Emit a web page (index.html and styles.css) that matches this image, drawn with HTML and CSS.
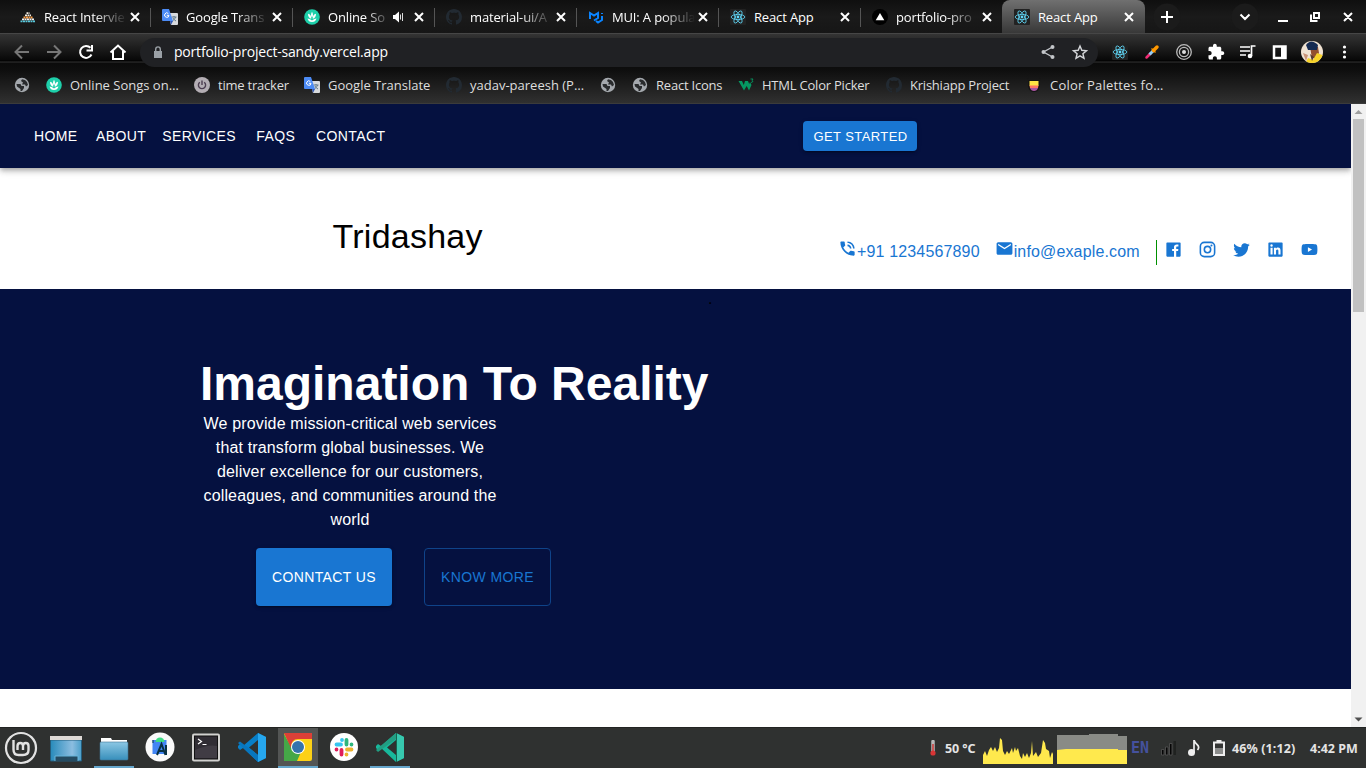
FILE: index.html
```html
<!DOCTYPE html>
<html lang="en">
<head>
<meta charset="utf-8">
<title>React App</title>
<link rel="stylesheet" href="styles.css">
</head>
<body>
<svg class="defs" width="0" height="0">
  <symbol id="x" viewBox="0 0 16 16"><path d="M4 4l8 8M12 4l-8 8" stroke="currentColor" stroke-width="2" fill="none"/></symbol>
  <symbol id="react" viewBox="0 0 16 16"><rect width="16" height="16" rx="1" fill="#222"/><g fill="none" stroke="#61dafb" stroke-width=".8"><ellipse cx="8" cy="8" rx="6.8" ry="2.6"/><ellipse cx="8" cy="8" rx="6.8" ry="2.6" transform="rotate(60 8 8)"/><ellipse cx="8" cy="8" rx="6.8" ry="2.6" transform="rotate(120 8 8)"/></g><circle cx="8" cy="8" r="1.4" fill="#61dafb"/></symbol>
  <symbol id="translate" viewBox="0 0 16 16"><path d="M6 4h9a1 1 0 0 1 1 1v10a1 1 0 0 1-1 1H9z" fill="#d8dadd"/><path d="M9.5 8h5M12 7v1M13.5 8c-.5 2-2 3-3 4M11 9c.7 1.500 1.500 2 3 3" stroke="#607988" fill="none"/><path d="M1 0h6l4 12H1a1 1 0 0 1-1-1V1a1 1 0 0 1 1-1z" fill="#4c8bf5"/><path d="M8 12h3l-2 4z" fill="#3057b5"/><path d="M6.300 4.500A2.200 2.200 0 1 0 7 6.300H4.800" stroke="#fff" fill="none"/></symbol>
  <symbol id="saavn" viewBox="0 0 16 16"><circle cx="8" cy="8" r="7.800" fill="#1ecfaa"/><path d="M8 8.500Q6 6.500 8 2.700 10 6.500 8 8.500z" fill="#fff"/><path d="M7.300 9.800Q4 9 4 4.800 7.300 5.500 7.300 9.800zM8.700 9.800q0-4.300 3.300-5Q12 9 8.700 9.800zM3.500 9.500Q5.500 9.700 8 11.500q2.500-1.800 4.500-2Q11.500 13 8 13t-4.500-3.500z" fill="#fff"/></symbol>
  <symbol id="github" viewBox="0 0 16 16"><path fill="#222a32" d="M8 0C3.580 0 0 3.580 0 8c0 3.540 2.290 6.530 5.470 7.590.4.070.550-.170.550-.380 0-.190-.010-.820-.010-1.490-2.010.370-2.530-.490-2.690-.940-.090-.230-.480-.940-.820-1.130-.280-.150-.680-.520-.010-.530.630-.010 1.080.580 1.230.820.720 1.210 1.870.870 2.330.660.070-.520.280-.870.510-1.070-1.780-.200-3.640-.890-3.640-3.950 0-.870.310-1.590.820-2.150-.080-.200-.360-1.020.080-2.120 0 0 .670-.210 2.200.820.640-.180 1.320-.270 2-.270s1.360.090 2 .270c1.530-1.040 2.200-.820 2.200-.820.440 1.100.160 1.920.080 2.120.510.560.820 1.270.820 2.150 0 3.070-1.870 3.750-3.650 3.950.290.250.540.730.540 1.480 0 1.070-.010 1.930-.010 2.200 0 .210.150.460.550.380A8.010 8.010 0 0 0 16 8c0-4.420-3.580-8-8-8z"/></symbol>
  <symbol id="globe" viewBox="0 0 16 16"><circle cx="8" cy="8" r="7.200" fill="#a4a8ad"/><path d="M2.500 7h4l1 2H10v2l-2 3H6.500v-2L3 9.500zM8 2.200L7 4l2 1.500L8 7.500h3L12 9.500l2-1.500-1-3-2-2z" fill="#292b2d"/></symbol>
</svg>

<header class="browser">
  <div class="tabs">
    <div class="tab"><svg class="fav" viewBox="0 0 16 16"><path d="M6.500 4.200h3M5 6.300h6" stroke="#f3ede2" stroke-width="1.800" stroke-dasharray="2 .5"/><path d="M3.500 8.500h9" stroke="#ff9f43" stroke-width="1.800" stroke-dasharray="2 .5"/><path d="M2 10.400h12" stroke="#eee" stroke-width="1.700" stroke-dasharray="2 .5"/><path d="M.5 12.300h15" stroke="#59c9dc" stroke-width="1.800" stroke-dasharray="2 .5"/></svg><span class="title fade">React Intervie</span><svg class="close"><use href="#x"/></svg></div>
    <div class="tab"><svg class="fav"><use href="#translate"/></svg><span class="title fade">Google Trans</span><svg class="close"><use href="#x"/></svg></div>
    <div class="tab"><svg class="fav"><use href="#saavn"/></svg><span class="title short fade">Online So</span><svg class="sound" viewBox="0 0 12 12"><path d="M0 4h2l4-3.500v11L2 8H0z" fill="#fff"/><path d="M7.500 3.500v5M9.500 2v8" stroke="#ddd"/></svg><svg class="close"><use href="#x"/></svg></div>
    <div class="tab"><svg class="fav"><use href="#github"/></svg><span class="title fade">material-ui/A</span><svg class="close"><use href="#x"/></svg></div>
    <div class="tab"><svg class="fav" viewBox="0 0 16 16"><path d="M2 10V4l4 2.500L10 4v5l-4 2.500M14 4v1M14 7v4l-4 2.500-2-1.500" stroke="#0a84ff" stroke-width="2" fill="none"/></svg><span class="title fade">MUI: A popula</span><svg class="close"><use href="#x"/></svg></div>
    <div class="tab"><svg class="fav"><use href="#react"/></svg><span class="title">React App</span><svg class="close"><use href="#x"/></svg></div>
    <div class="tab last"><svg class="fav" viewBox="0 0 16 16"><circle cx="8" cy="8" r="8" fill="#000"/><path d="M8 4l4.300 7.300H3.700z" fill="#fff"/></svg><span class="title fade">portfolio-pro</span><svg class="close"><use href="#x"/></svg></div>
    <div class="tab active"><svg class="fav"><use href="#react"/></svg><span class="title">React App</span><svg class="close"><use href="#x"/></svg></div>
    <svg class="window" viewBox="1145 0 221 33" fill="none" stroke="#fff" stroke-width="2"><circle cx="1167" cy="17" r="13.500" fill="#1b1b1b" stroke="none"/><circle cx="1245" cy="17" r="13.500" fill="#1b1b1b" stroke="none"/><path d="M1161 17h12M1167 11v12M1240.500 14.500l4.500 4.500 4.500-4.500M1278 21h10M1344 13l8 8M1352 13l-8 8"/><path d="M1314 13h5v5h-5zM1311 14.500v6.500h6.500"/></svg>
  </div>
  <div class="toolbar">
    <svg class="navicons" viewBox="0 36 140 32" fill="none" stroke="#fff" stroke-width="2"><path d="M29 52H16M22 45.500L15.500 52l6.500 6.500M47 52h13M54 45.500l6.500 6.500-6.500 6.500" stroke="#777"/><path d="M91.500 54.500A6 6 0 1 1 90.500 47.800M92 45v5.500h-5.500"/><path d="M110.500 52.500L118 45.500l7.500 7M113 51v8h10v-8"/></svg>
    <div class="omnibox">
      <svg class="lock" viewBox="0 0 10 13"><path d="M1 5h8v7H1z" fill="#9aa0a6"/><path d="M2.700 5V3.200a2.300 2.300 0 0 1 4.600 0V5" fill="none" stroke="#9aa0a6" stroke-width="1.400"/></svg>
      <span class="url">portfolio-project-sandy.vercel.app</span>
      <svg class="boxicons" viewBox="1032 38 66 29"><path d="M1052.500 47l-9 5 9 5" fill="none" stroke="#c4c7cb" stroke-width="1.400"/><g fill="#c4c7cb"><circle cx="1052.500" cy="47" r="2"/><circle cx="1043.500" cy="52" r="2"/><circle cx="1052.500" cy="57" r="2"/></g><path d="M1080 46l1.800 4.300 4.700.4-3.600 3 1.100 4.600-4-2.500-4 2.500 1.100-4.600-3.600-3 4.700-.4z" fill="none" stroke="#d5d7da" stroke-width="1.400"/></svg>
    </div>
    <svg class="exticons" viewBox="1098 36 268 32">
      <use href="#react" x="1112" y="44" width="16" height="16"/>
      <path d="M1146.500 57.500l4-4" stroke="#f12d75" stroke-width="2.500" stroke-linecap="round"/><path d="M1149.500 54.500l4-4" stroke="#95cef5" stroke-width="3"/><path d="M1153.500 50.500l3.500-3.500" stroke="#ff9800" stroke-width="3.500" stroke-linecap="round"/><path d="M1151.500 48.500l4 4" stroke="#ff9800" stroke-width="1.200"/>
      <g fill="none" stroke="#bbb" stroke-width="1.300"><circle cx="1184" cy="52" r="7.300"/><circle cx="1184" cy="52" r="4.600"/></g><circle cx="1184" cy="52" r="2" fill="#ddd"/>
      <path transform="translate(1207 43) scale(.75)" fill="#fff" d="M20.500 11H19V7c0-1.100-.9-2-2-2h-4V3.500C13 2.120 11.880 1 10.500 1S8 2.120 8 3.500V5H4c-1.100 0-2 .9-2 2v3.800h1.500c1.500 0 2.700 1.200 2.700 2.700S5 16.200 3.500 16.200H2V20c0 1.100.9 2 2 2h3.800v-1.500c0-1.500 1.200-2.700 2.700-2.700s2.700 1.200 2.700 2.700V22H17c1.100 0 2-.9 2-2v-4h1.500c1.380 0 2.500-1.120 2.500-2.500S21.880 11 20.500 11z"/>
      <path d="M1240 47h10M1240 51h10M1240 55h6M1251.500 56v-10h4" fill="none" stroke="#fff" stroke-width="1.700"/><circle cx="1250" cy="56" r="2.300" fill="#fff"/>
      <path d="M1274 46.500h11.500v11.500H1274z" fill="none" stroke="#fff" stroke-width="2.500"/><path d="M1281 46h5v12h-5z" fill="#fff"/>
      <clipPath id="av"><circle cx="1312" cy="52" r="11"/></clipPath><g clip-path="url(#av)"><path d="M1300 40h24v24h-24z" fill="#f0e2d2"/><path d="M1310 47h8l1 6-3 5h-4z" fill="#93502f"/><path d="M1306 45q5-7 12 0l-1 5h-9z" fill="#152b52"/><path d="M1305 64l3-6 5 2 4-7 8 3-2 8z" fill="#f7d329"/><path d="M1303 53l5 2-2 6z" fill="#c99277"/><path d="M1310 54l4 3-2 4z" fill="#593b2e"/></g>
      <g fill="#fff"><circle cx="1344.500" cy="47" r="1.600"/><circle cx="1344.500" cy="52" r="1.600"/><circle cx="1344.500" cy="57" r="1.600"/></g>
    </svg>
  </div>
  <div class="bookmarks">
    <div><svg><use href="#globe"/></svg></div>
    <div><svg><use href="#saavn"/></svg><span>Online Songs on…</span></div>
    <div><svg viewBox="0 0 16 16"><circle cx="8" cy="8" r="8" fill="#b4aeb4"/><path d="M5.800 5.200a3.600 3.600 0 1 0 4.400 0M8 3.500V8" fill="none" stroke="#4b3d50" stroke-width="1.400"/></svg><span class="tight">time tracker</span></div>
    <div><svg><use href="#translate"/></svg><span>Google Translate</span></div>
    <div><svg><use href="#github"/></svg><span>yadav-pareesh (P…</span></div>
    <div><svg><use href="#globe"/></svg></div>
    <div><svg><use href="#globe"/></svg><span class="tight">React Icons</span></div>
    <div><svg viewBox="0 0 16 16"><path d="M.5 4H4l1.800 4L7 4h3l1.200 3L12 5l1.500 3L11 13.500 8.700 9 6 13.500z" fill="#059862"/><path d="M12.500 2H15l-1 1.500q1.500.5.500 1.500l-1.500.5" fill="none" stroke="#059862" stroke-width=".9"/></svg><span class="tight">HTML Color Picker</span></div>
    <div><svg><use href="#github"/></svg><span class="tight">Krishiapp Project</span></div>
    <div><svg viewBox="0 0 16 16"><path d="M2 3h12v6q-1 6-6 6T2 9z" fill="#141414"/><path d="M3.500 4h9v5h-9z" fill="#ffe344"/><path d="M3.500 8.500h9L12 11H4z" fill="#ff7565"/><path d="M4 11h8q-1 3-4 3t-4-3z" fill="#a855a0"/><path d="M1 2l2-1M13 1l2 1" stroke="#151515"/></svg><span class="loose">Color Palettes fo…</span></div>
  </div>
</header>

<div class="viewport">
  <main class="page">
    <nav class="nav">
      <a class="home">HOME</a><a class="about">ABOUT</a><a class="services">SERVICES</a><a class="faqs">FAQS</a><a>CONTACT</a>
      <button class="btn start">GET STARTED</button>
    </nav>
    <section class="brandbar">
      <h4 class="brand">Tridashay</h4>
      <div class="contact">
        <a class="phone"><svg viewBox="0 0 24 24"><path d="M20 15.500c-1.250 0-2.450-.2-3.570-.57-.35-.11-.74-.03-1.020.24l-2.200 2.200c-2.830-1.440-5.150-3.750-6.590-6.590l2.200-2.210c.28-.26.36-.65.25-1C8.700 6.450 8.500 5.250 8.500 4c0-.55-.45-1-1-1H4c-.55 0-1 .45-1 1 0 9.390 7.610 17 17 17 .55 0 1-.45 1-1v-3.500c0-.55-.45-1-1-1zM19 12h2c0-4.970-4.030-9-9-9v2c3.870 0 7 3.130 7 7zm-4 0h2c0-2.760-2.240-5-5-5v2c1.660 0 3 1.340 3 3z"/></svg><span>+91 1234567890</span></a>
        <a class="mail"><svg viewBox="0 0 24 24"><path d="M20 4H4c-1.100 0-1.990.9-1.990 2L2 18c0 1.100.9 2 2 2h16c1.100 0 2-.9 2-2V6c0-1.100-.9-2-2-2zm0 4l-8 5-8-5V6l8 5 8-5v2z"/></svg><span>info@exaple.com</span></a>
        <div class="social">
          <svg viewBox="0 0 24 24"><path d="M20 3H4a1 1 0 0 0-1 1v16a1 1 0 0 0 1 1h8.615v-6.960h-2.338v-2.725h2.338v-2c0-2.325 1.420-3.592 3.500-3.592.699-.002 1.399.034 2.095.107v2.420h-1.435c-1.128 0-1.348.538-1.348 1.325v1.735h2.697l-.35 2.725h-2.348V21H20a1 1 0 0 0 1-1V4a1 1 0 0 0-1-1z"/></svg>
          <svg viewBox="0 0 24 24"><rect x="3" y="3" width="18" height="18" rx="5" fill="none" stroke="currentColor" stroke-width="2"/><circle cx="12" cy="12" r="4" fill="none" stroke="currentColor" stroke-width="2"/><circle cx="17" cy="7" r="1.300"/></svg>
          <svg viewBox="0 0 24 24"><path d="M22.460 6c-.77.35-1.600.58-2.460.69.88-.53 1.560-1.370 1.880-2.380-.83.5-1.750.85-2.720 1.050C18.370 4.500 17.260 4 16 4c-2.350 0-4.270 1.920-4.270 4.290 0 .34.04.67.11.98C8.280 9.090 5.110 7.380 3 4.790c-.37.63-.58 1.370-.58 2.150 0 1.490.75 2.810 1.910 3.560-.71 0-1.370-.2-1.950-.5v.03c0 2.080 1.480 3.820 3.440 4.210a4.220 4.220 0 0 1-1.930.07 4.280 4.280 0 0 0 4 2.980 8.521 8.521 0 0 1-5.330 1.840c-.34 0-.68-.02-1.020-.06C3.440 20.290 5.700 21 8.120 21 16 21 20.330 14.460 20.330 8.790c0-.19 0-.37-.01-.56.84-.6 1.560-1.360 2.140-2.230z"/></svg>
          <svg viewBox="0 0 24 24"><path d="M20 3H4a1 1 0 0 0-1 1v16a1 1 0 0 0 1 1h16a1 1 0 0 0 1-1V4a1 1 0 0 0-1-1zM8.339 18.337H5.667v-8.590h2.672v8.590zM7.003 8.574a1.548 1.548 0 1 1 0-3.096 1.548 1.548 0 0 1 0 3.096zm11.335 9.763h-2.669V14.160c0-.996-.018-2.277-1.388-2.277-1.390 0-1.601 1.086-1.601 2.207v4.248h-2.667v-8.590h2.560v1.174h.037c.355-.675 1.227-1.387 2.524-1.387 2.704 0 3.203 1.778 3.203 4.092v4.711z"/></svg>
          <svg viewBox="0 0 24 24"><path d="M21.590 7.200c-.23-.86-.91-1.540-1.770-1.770C18.250 5 12 5 12 5s-6.250 0-7.820.42c-.86.23-1.540.91-1.770 1.770C2 8.770 2 12 2 12s0 3.230.42 4.800c.23.86.91 1.540 1.770 1.770C5.750 19 12 19 12 19s6.250 0 7.820-.42c.86-.23 1.540-.91 1.770-1.770C22 15.230 22 12 22 12s0-3.230-.41-4.800zM10 15V9l5.200 3z"/></svg>
        </div>
      </div>
    </section>
    <section class="hero">
      <div class="dot">.</div>
      <h1>Imagination To Reality</h1>
      <p>We provide mission-critical web services that transform global businesses. We deliver excellence for our customers, colleagues, and communities around the world</p>
      <div class="actions"><button class="btn big">CONNTACT US</button><button class="btn big outline">KNOW MORE</button></div>
    </section>
  </main>
  <div class="scrollbar"><svg viewBox="0 0 15 15"><path d="M3.500 10h8l-4-4z" fill="#9f9f9f"/></svg><div class="thumb"></div><svg class="down" viewBox="0 0 15 15"><path d="M3.500 5.500h8l-4 4z" fill="#505050"/></svg></div>
</div>

<footer class="taskbar">
  <svg class="apps" viewBox="0 727 414 41">
    <defs><linearGradient id="blue" x2="0" y2="1"><stop stop-color="#8cc7e4"/><stop offset="1" stop-color="#378fbb"/></linearGradient><linearGradient id="desk"><stop stop-color="#288bbb"/><stop offset=".7" stop-color="#8cbde0"/><stop offset="1" stop-color="#4a9fc9"/></linearGradient></defs>
    <circle cx="21" cy="748" r="15" fill="none" stroke="#e2e2e2" stroke-width="2.200"/><path d="M13.500 740v9.500q0 5.500 5 5.500H23q5.500 0 5.500-5v-4q0-3-2.700-3t-2.800 3v4M23 746q0-3-2.700-3t-2.800 3v4" fill="none" stroke="#e2e2e2" stroke-width="2.400"/>
    <path d="M50.500 740h31v21h-31z" fill="url(#desk)" stroke="#245d7c"/><path d="M50 736h32v4H50z" fill="#ddd8d5"/><path d="M55 761v-5h23v5" fill="#254b61" stroke="#67b5db"/>
    <path d="M101 738h10l1 2h15v4h-26z" fill="#fff"/><rect x="100" y="742" width="28" height="18" rx="1" fill="url(#blue)" stroke="#3c7494" stroke-width=".6"/><path d="M94 766h40v2H94zM278 766h40v2h-40zM370 766h40v2h-40z" fill="#65a6cc"/>
    <circle cx="160" cy="747" r="14.500" fill="#fafafa"/><path d="M152.500 740h14v14h-14z" fill="#4285f4"/><path d="M155.500 742a4.500 4.500 0 0 1 9 0z" fill="#3ddc84"/><path d="M157 755l4.500-11 4 11M159 751h5M166 745v10" fill="none" stroke="#073042" stroke-width="2"/><path d="M153 740v3" stroke="#073042"/>
    <rect x="192" y="733.500" width="28" height="28" rx="2" fill="#d1d1cf"/><rect x="194.500" y="736" width="23" height="23" fill="#302d34" stroke="#111"/><path d="M195 750q14-6 22-4v12h-22z" fill="#403c44"/><path d="M198 739l3.500 2.500-3.500 2.500M202.500 744.500h4" fill="none" stroke="#fff" stroke-width="1.200"/>
    <path d="M258 733l8 4v21l-8 4-15-14-3 2-2-2v-2l2-2 3 2zM258 740l-9 7.500 9 7.500z" fill="#087fc8" fill-rule="evenodd"/><path d="M258 733l8 4v21l-8 4z" fill="#26a7ef"/><path d="M238 743l2-1.500L258 755v7z" fill="#0876be"/>
    <path d="M278 728h40v38h-40z" fill="#535554"/><rect x="284" y="733" width="28" height="28" rx="2" fill="#fcd116"/><path d="M284 734l9 16 8 2-4 9h-13z" fill="#45a747"/><path d="M284 733h28v6h-14q-7 0-7 9z" fill="#dc4037"/><circle cx="298" cy="747" r="7" fill="#fff"/><circle cx="298" cy="747" r="6" fill="#3573ad"/>
    <circle cx="344" cy="747" r="14" fill="#fff"/><g stroke-width="3.800" stroke-linecap="round"><path d="M336.500 744.500h4.500M342 740v0" stroke="#36c5f0"/><path d="M346.500 740v4.500M351.500 744.500h0" stroke="#2eb67d"/><path d="M347 749.500h4.500M346.500 754.500h0" stroke="#ecb22e"/><path d="M341.500 750v4.500M336.500 749.500h0" stroke="#e01e5a"/></g>
    <path d="M396 733l8 4v21l-8 4-15-14-3 2-2-2v-2l2-2 3 2zM396 740l-9 7.500 9 7.500z" fill="#18b89b" fill-rule="evenodd"/><path d="M396 733l8 4v21l-8 4z" fill="#37c8ae"/><path d="M376 750l2 2 18-13v-6z" fill="#229e82"/><path d="M396.500 733v29" stroke="#17634f"/>
  </svg>
  <div class="tray">
    <svg class="thermo" viewBox="0 0 8 16"><path d="M4 1.500v11" stroke="#b9b9b9" stroke-width="3.500" stroke-linecap="round"/><path d="M4 4v8" stroke="#cf3030" stroke-width="1.400"/><circle cx="4" cy="13" r="2.600" fill="#d83535"/></svg>
    <span class="temp">50 °C</span>
    <svg class="cpu" viewBox="0 0 70 30"><path fill="#ffe94d" d="M0 30V21L2 17 4 22 6 16 8 13 10 17 12 13 14 18 16 14 17 4 19 6 20 17 22 21 24 17 26 20 29 14 30 19 32 13 33 17 35 14 37 22 39 25 40 19 42 23 44 19 46 24 48 19 49 7 50 22 53 18 55 23 58 19 60 6 62 9 63 15 66 17 67 24 69 18 70 20V30z"/></svg>
    <svg class="mem" viewBox="0 0 70 30"><path fill="#898b86" d="M0 1h32V0h29v2h9v28H0z"/><path fill="#ffe94d" d="M0 16l9-1h52v1h9v14H0z"/></svg>
    <span class="lang">EN</span>
    <svg class="signal" viewBox="0 0 16 16"><g fill="#050505" stroke="#555" stroke-width=".8"><path d="M1.500 9.500H4V15H1.500zM5.500 7H8v8H5.500zM9.500 3.500H12V15H9.500z"/></g><path d="M13.500 1H16v14h-2.500z" fill="#202220"/></svg>
    <svg class="note" viewBox="0 0 12 16"><circle cx="3.500" cy="12.500" r="3.500" fill="#eee"/><path d="M6 13V0q1 3 3 4.500Q12 7 9.500 10" fill="none" stroke="#eee" stroke-width="1.700"/></svg>
    <svg class="battery" viewBox="0 0 12 16"><path d="M1 2.500h10V15H1z" fill="#343534" stroke="#eee" stroke-width="2"/><path d="M3.500 0h5v2h-5z" fill="#eee"/><path d="M2 8h8v6H2z" fill="#8b8c8b"/></svg>
    <span class="percent">46% (1:12)</span>
    <span class="clock">4:42 PM</span>
  </div>
</footer>
</body>
</html>
```
FILE: styles.css
```css
* { box-sizing: border-box; }
body { margin: 0; width: 1366px; height: 768px; overflow: hidden; display: flex; flex-direction: column; background: #fff; font-family: "Liberation Sans", Arial, sans-serif; }
svg { display: block; flex: none; }
.defs { position: absolute; }

.browser { height: 104px; flex: none; color: #fff; font: 13px "Open Sans", "Noto Sans", sans-serif; background: #303030; border-bottom: 1px solid #3b3b3b; }
.tabs { height: 33px; display: flex; padding-left: 8px; background: linear-gradient(#0f0f0f, #1a1a1a 50%, #161616); }
.tab { width: 142px; flex: none; display: flex; align-items: center; padding: 1px 7px 0 12px; position: relative; }
.tab::after { content: ""; position: absolute; right: -1px; top: 8px; width: 1px; height: 19px; background: #555; }
.tab.last::after, .tab.active::after { display: none; }
.tab.active { width: 143px; background: linear-gradient(#707070, #383838); border-radius: 8px 8px 0 0; }
.fav { width: 16px; height: 16px; margin-right: 8px; }
.title { width: 83px; white-space: nowrap; letter-spacing: -.15px; }
.title.short { width: 63px; margin-right: 2px; }
.sound { width: 12px; height: 12px; margin-right: 6px; }
.fade { mask-image: linear-gradient(90deg, #000 60%, transparent); }
.close { width: 16px; height: 16px; }
.window { width: 221px; height: 33px; }
.toolbar { height: 37px; border-top: 1px solid #464646; display: flex; align-items: center; background: linear-gradient(#343434, #080808 26px, #000 27px, #333 28px, #0b0b0b 29px, #0e0e0e); }
.navicons { width: 140px; height: 32px; }
.omnibox { width: 958px; height: 29px; border-radius: 15px; background: #202124; display: flex; align-items: center; padding-left: 13px; }
.lock { width: 10px; height: 13px; }
.url { flex: 1; padding: 0 0 2px 11px; font-size: 14px; letter-spacing: -.2px; }
.boxicons { width: 66px; height: 29px; }
.exticons { width: 268px; height: 32px; }
.bookmarks { height: 33px; padding: 0 0 3px 14px; display: grid; grid-template-columns: 32px 148px 110px 142px 154px 32px 106px 148px 140px 200px; align-items: center; background: linear-gradient(#0e0e0e, #303030); color: #dedede; }
.bookmarks div { display: flex; align-items: center; gap: 8px; white-space: nowrap; }
.bookmarks svg { width: 16px; height: 16px; }
.tight { letter-spacing: -.22px; }
.loose { letter-spacing: .2px; }

.viewport { height: 623px; flex: none; display: flex; }
.page { width: 1351px; overflow: hidden; }
.nav { height: 64px; position: relative; background: #051140; color: #fff; display: flex; align-items: center; padding-left: 34px; font-size: 14px; letter-spacing: .4px; box-shadow: 0 2px 4px -1px rgba(0,0,0,.2), 0 4px 5px rgba(0,0,0,.14), 0 1px 10px rgba(0,0,0,.12); }
.home { width: 62px; }
.about { width: 66.3px; }
.services { width: 94px; }
.faqs { width: 59.7px; }
.btn { border: 0; border-radius: 4px; color: #fff; background: #1976d2; font: 14px "Liberation Sans", Arial, sans-serif; letter-spacing: .4px; padding: 0; box-shadow: 0 3px 1px -2px rgba(0,0,0,.2), 0 2px 2px rgba(0,0,0,.14), 0 1px 5px rgba(0,0,0,.12); }
.start { width: 114px; height: 30px; margin-left: auto; margin-right: 434px; padding-left: 1px; font-size: 13px; letter-spacing: .42px; }
.brandbar { height: 121px; display: flex; padding: 47px 31.600px 0 332.500px; justify-content: space-between; }
.brand { margin: 0; font-size: 34px; line-height: 42px; font-weight: 400; letter-spacing: .25px; color: #000; }
.contact { display: flex; color: #1976d2; font-size: 16px; line-height: 24px; letter-spacing: .15px; padding-top: 25px; }
.contact svg { width: 19px; height: 19px; fill: currentColor; }
.contact a { display: flex; height: 25px; }
.contact a svg { margin-top: -1px; margin-right: -.4px; }
.phone { width: 156.600px; }
.mail { width: 161px; }
.social { display: flex; gap: 15px; height: 25px; border-left: 1px solid #009000; padding-left: 7.400px; }
.social svg { margin-top: -.5px; }
.hero { height: 400px; background: #051140; color: #fff; padding-left: 200px; }
.dot { height: 67px; padding: 1px 0 0 508px; font-size: 16px; line-height: 18px; color: #000; }
.hero h1 { margin: 0; font-size: 48px; line-height: 56px; }
.hero p { width: 300px; margin: 0; font-size: 16px; line-height: 24px; letter-spacing: .15px; text-align: center; }
.actions { display: flex; gap: 32px; padding: 16px 0 0 56px; }
.big { width: 136px; height: 58px; }
.outline { width: 127px; background: none; color: #1976d2; border: 1px solid #0f4389; box-shadow: none; }
.scrollbar { width: 15px; background: #f1f1f1; display: flex; flex-direction: column; }
.scrollbar svg { width: 15px; height: 15px; }
.thumb { width: 11px; height: 193px; margin-left: 2px; background: #c1c1c1; }
.scrollbar .down { margin-top: auto; }

.taskbar { height: 41px; flex: none; background: #2f3130; border-top: 1px solid #222423; display: flex; justify-content: space-between; color: #e4e4e4; font: bold 12.500px "Noto Sans", "Open Sans", sans-serif; }
.apps { width: 414px; height: 41px; margin-top: -1px; }
.tray { width: 437px; display: flex; align-items: center; white-space: nowrap; }
.thermo { width: 8px; height: 16px; margin-right: 8px; }
.temp { width: 38px; letter-spacing: -.1px; }
.cpu, .mem { width: 70px; height: 30px; margin: 1px 4px 0 0; }
.lang { width: 29px; color: #45519d; font: bold 15px "DejaVu Sans Mono", monospace; }
.signal { width: 16px; height: 16px; margin-right: 12px; }
.note { width: 12px; height: 16px; margin-right: 13px; }
.battery { width: 12px; height: 16px; margin-right: 7px; }
.percent { width: 78px; letter-spacing: .1px; }
```
